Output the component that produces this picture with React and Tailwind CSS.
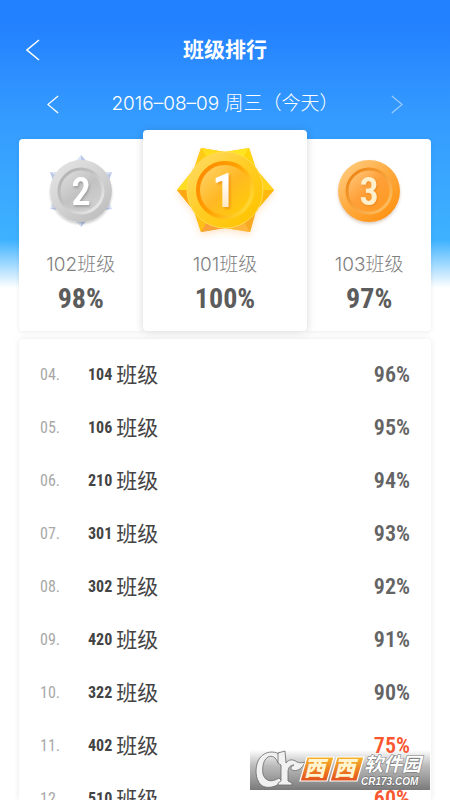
// src/App.jsx
import React, { memo } from 'react';

const rankings = [
    { rank: '04', room: '104', rate: 96 },
    { rank: '05', room: '106', rate: 95 },
    { rank: '06', room: '210', rate: 94 },
    { rank: '07', room: '301', rate: 93 },
    { rank: '08', room: '302', rate: 92 },
    { rank: '09', room: '420', rate: 91 },
    { rank: '10', room: '322', rate: 90 },
    { rank: '11', room: '402', rate: 75 },
    { rank: '12', room: '510', rate: 60 },
];

const Chevron = ({ flip, className }) => (
    <svg viewBox="0 0 14 22" className={className} fill="none" stroke="currentColor" strokeWidth="1.5" aria-hidden="true">
        <path d={flip ? 'M1 1 L13 11 L1 21' : 'M13 1 L1 11 L13 21'} />
    </svg>
);

const GoldMedal = () => (
    <svg viewBox="0 0 106 100" className="h-[100px] w-[106px]" role="img" aria-label="第一名">
        <defs>
            <linearGradient id="goldFace" x1="0.1" y1="0.1" x2="0.9" y2="0.9">
                <stop offset="0" stopColor="#ffd95c" />
                <stop offset="0.5" stopColor="#ffcc22" />
                <stop offset="1" stopColor="#ffc400" />
            </linearGradient>
            <linearGradient id="goldInner" x1="0" y1="0" x2="1" y2="1">
                <stop offset="0" stopColor="#ffd672" />
                <stop offset="0.5" stopColor="#ffb824" />
                <stop offset="1" stopColor="#ffd200" />
            </linearGradient>
            <linearGradient id="goldRing" x1="0" y1="0.2" x2="1" y2="0.8">
                <stop offset="0" stopColor="#ff8a00" />
                <stop offset="0.45" stopColor="#ffa000" />
                <stop offset="1" stopColor="#ffdc38" />
            </linearGradient>
            <linearGradient id="goldDigit" x1="0" y1="0" x2="0" y2="1">
                <stop offset="0.3" stopColor="#ffffff" />
                <stop offset="1" stopColor="#ffe0a8" />
            </linearGradient>
            <filter id="goldGlow" x="-20%" y="-20%" width="140%" height="140%">
                <feDropShadow dx="0" dy="3" stdDeviation="3" floodColor="#ff9a30" floodOpacity="0.25" />
            </filter>
            <filter id="goldDigitShadow" x="-50%" y="-20%" width="200%" height="150%">
                <feDropShadow dx="2" dy="2" stdDeviation="1.2" floodColor="#e88400" floodOpacity="0.6" />
            </filter>
        </defs>
        <g filter="url(#goldGlow)">
            <path d="M29 7 L53 11 L77 7 L84 28 L102 49 L84 70 L78 91 L53 87 L29 91 L22 70 L5 49 L22 28Z" fill="#ffc21a" />
            <path d="M29 7 L53 11 L53 49Z" fill="#ffdc1c" />
            <path d="M29 7 L22 28 L53 49Z" fill="#ffcb14" />
            <path d="M77 7 L53 11 L53 49Z" fill="#ffe420" />
            <path d="M77 7 L84 28 L53 49Z" fill="#ffd60e" />
            <path d="M102 49 L84 28 L53 49Z" fill="#ffd31a" />
            <path d="M102 49 L84 70 L53 49Z" fill="#ffb808" />
            <path d="M5 49 L22 28 L53 49Z" fill="#ffdd20" />
            <path d="M5 49 L22 70 L53 49Z" fill="#ffa812" />
            <path d="M29 91 L22 70 L53 49Z" fill="#ffbf14" />
            <path d="M29 91 L53 87 L53 49Z" fill="#f9a038" />
            <path d="M78 91 L53 87 L53 49Z" fill="#ffb63c" />
            <path d="M78 91 L84 70 L53 49Z" fill="#f9a824" />
        </g>
        <circle cx="53" cy="49" r="38" fill="url(#goldFace)" stroke="#ffdc50" strokeWidth="1" />
        <circle cx="53" cy="49" r="27" fill="url(#goldInner)" stroke="url(#goldRing)" strokeWidth="4" />
        <text x="52" y="66" textAnchor="middle" fontSize="48" fontWeight="600" fill="url(#goldDigit)" filter="url(#goldDigitShadow)" className="[font-family:'Roboto_Condensed',Roboto,sans-serif]">1</text>
    </svg>
);

const SilverMedal = () => (
    <svg viewBox="0 0 80 84" className="h-[84px] w-[80px]" role="img" aria-label="第二名">
        <defs>
            <linearGradient id="silverFace" x1="0.1" y1="0" x2="0.9" y2="1">
                <stop offset="0" stopColor="#e4e4e4" />
                <stop offset="0.5" stopColor="#d2d2d2" />
                <stop offset="1" stopColor="#bbbbbb" />
            </linearGradient>
            <linearGradient id="silverInner" x1="0.1" y1="0" x2="0.9" y2="1">
                <stop offset="0" stopColor="#dedede" />
                <stop offset="0.5" stopColor="#c2c2c2" />
                <stop offset="1" stopColor="#d4d4d4" />
            </linearGradient>
            <linearGradient id="silverRing" x1="0" y1="0" x2="1" y2="1">
                <stop offset="0" stopColor="#b0b0b0" />
                <stop offset="0.4" stopColor="#c0c0c0" />
                <stop offset="1" stopColor="#f0f0f0" />
            </linearGradient>
            <filter id="silverShadow" x="-20%" y="-20%" width="140%" height="150%">
                <feDropShadow dx="0" dy="2" stdDeviation="1.2" floodColor="#000000" floodOpacity="0.2" />
            </filter>
            <filter id="silverDigitShadow" x="-50%" y="-20%" width="200%" height="150%">
                <feDropShadow dx="1" dy="2" stdDeviation="1" floodColor="#888888" floodOpacity="0.6" />
            </filter>
        </defs>
        <path d="M40 6 L47 14 L33 14Z M71 23 L60 23 L67 34Z M71 60 L60 61 L67 50Z M40 78 L47 70 L33 70Z M9 60 L20 61 L13 50Z M9 23 L20 23 L13 34Z" fill="#dde4f5" />
        <path d="M40 6 L40 14 L47 14Z M71 23 L62 28 L67 34Z M71 60 L62 57 L60 61Z M40 78 L40 70 L47 70Z M9 60 L18 57 L20 61Z M9 23 L18 28 L13 34Z" fill="#bccaea" />
        <circle cx="40" cy="42" r="31" fill="url(#silverFace)" filter="url(#silverShadow)" />
        <circle cx="40" cy="42" r="22" fill="url(#silverInner)" stroke="url(#silverRing)" strokeWidth="3" />
        <text x="40" y="56" textAnchor="middle" fontSize="38" fontWeight="600" fill="#ffffff" filter="url(#silverDigitShadow)" className="[font-family:'Roboto_Condensed',Roboto,sans-serif]">2</text>
    </svg>
);

const BronzeMedal = () => (
    <svg viewBox="0 0 80 84" className="h-[84px] w-[80px]" role="img" aria-label="第三名">
        <defs>
            <linearGradient id="bronzeFace" x1="0.1" y1="0.1" x2="0.8" y2="0.9">
                <stop offset="0" stopColor="#ffc97a" />
                <stop offset="0.5" stopColor="#ffab40" />
                <stop offset="1" stopColor="#ff9416" />
            </linearGradient>
            <linearGradient id="bronzeInner" x1="0" y1="0" x2="0.9" y2="1">
                <stop offset="0" stopColor="#ffcd84" />
                <stop offset="0.5" stopColor="#ff9f38" />
                <stop offset="1" stopColor="#ff9a20" />
            </linearGradient>
            <linearGradient id="bronzeRing" x1="0" y1="0" x2="1" y2="1">
                <stop offset="0" stopColor="#e8800e" />
                <stop offset="0.4" stopColor="#f59a30" />
                <stop offset="1" stopColor="#ffc468" />
            </linearGradient>
            <filter id="bronzeShadow" x="-20%" y="-20%" width="140%" height="150%">
                <feDropShadow dx="0" dy="2" stdDeviation="1.5" floodColor="#906040" floodOpacity="0.3" />
            </filter>
            <filter id="bronzeDigitShadow" x="-50%" y="-20%" width="200%" height="150%">
                <feDropShadow dx="1" dy="1" stdDeviation="1" floodColor="#e07800" floodOpacity="0.6" />
            </filter>
        </defs>
        <circle cx="40" cy="42" r="31" fill="url(#bronzeFace)" filter="url(#bronzeShadow)" />
        <circle cx="40" cy="42" r="22" fill="url(#bronzeInner)" stroke="url(#bronzeRing)" strokeWidth="3" />
        <text x="40" y="56" textAnchor="middle" fontSize="38" fontWeight="600" fill="#fff0cc" filter="url(#bronzeDigitShadow)" className="[font-family:'Roboto_Condensed',Roboto,sans-serif]">3</text>
    </svg>
);

const PodiumInfo = ({ room, rate }) => (
    <>
        <h2 className="text-[19px] leading-7 font-light text-[#808080]">{room}班级</h2>
        <p className="mt-1 text-[28px] leading-8 font-bold text-[#5c5c5c] [font-family:'Roboto_Condensed',Roboto,sans-serif]">{rate}%</p>
    </>
);

const RankRow = memo(({ rank, room, rate }) => (
    <li className="flex h-[53px] shrink-0 items-center px-[21px]">
        <span className="w-12 text-base text-[#a8a8a8] [font-family:'Roboto_Condensed',Roboto,sans-serif]">{rank}.</span>
        <span className="flex flex-1 items-center gap-1 text-[#444]">
            <b className="text-base font-bold [font-family:'Roboto_Condensed',Roboto,sans-serif]">{room}</b>
            <span className="text-[21px]">班级</span>
        </span>
        <span className={`text-[22px] font-semibold [font-family:'Roboto_Condensed',Roboto,sans-serif] ${rate < 90 ? 'text-[#fa5630]' : 'text-[#646464]'}`}>
            {rate}%
        </span>
    </li>
));

const SiteMark = () => (
    <svg viewBox="0 0 180 40" className="absolute right-5 bottom-[10px] h-10 w-[180px]" role="img" aria-label="西西软件园">
        <defs>
            <linearGradient id="markBar" x1="0" y1="0" x2="0" y2="1">
                <stop offset="0" stopColor="#888888" stopOpacity="0" />
                <stop offset="0.4" stopColor="#8c8c8c" stopOpacity="0.6" />
                <stop offset="1" stopColor="#757575" stopOpacity="0.97" />
            </linearGradient>
            <linearGradient id="markTile" x1="0" y1="0" x2="0" y2="1">
                <stop offset="0" stopColor="#f6b52c" />
                <stop offset="1" stopColor="#e4501c" />
            </linearGradient>
        </defs>
        <rect width="180" height="40" fill="url(#markBar)" />
        {/* monogram with the leaf */}
        <g stroke="#6b6b6b" strokeWidth="0.8" fill="#f1f1f1" strokeLinejoin="round">
            <path d="M22 2 C26 2 27 4 30 3 L32 13 L28 13 C26 7 22 5 18 7 C13 10 12 18 13 24 C15 31 21 33 29 28 L32 31 C26 38 16 39 11 35 C5 29 5 18 8 11 C11 5 16 2 22 2Z" />
            <path d="M28 3 L35 1 L36 13 C39 9 43 9 47 12 C49 13 52 13 55 12 C52 19 47 22 42 20 C40 19 41 16 44 15 C40 15 38 18 38 22 L38 31 L42 33 L42 35 L28 35 L28 33 L31 31 L31 15 L28 13Z" />
        </g>
        <path d="M57 7 H84 L77 31 H50Z M87 7 H114 L107 31 H80Z" fill="url(#markTile)" stroke="#fff" strokeWidth="1.2" />
        <g fontWeight="900" fontStyle="italic" fill="#fff" className="[font-family:'Noto_Sans_CJK_SC',sans-serif]">
            <text x="54" y="26" fontSize="21" fill="#fff4d0">西</text>
            <text x="84" y="26" fontSize="21" fill="#fff4d0">西</text>
            <text x="114" y="21" fontSize="19" fontWeight="700" stroke="#707070" strokeWidth="1" paintOrder="stroke">软件园</text>
        </g>
        <text x="111" y="35" fontSize="10" fontWeight="700" fontStyle="italic" fill="#fff" stroke="#606060" strokeWidth="1" paintOrder="stroke" className="[font-family:'Liberation_Sans',sans-serif]">CR173.COM</text>
    </svg>
);

const App = () => (
    <div className="relative flex h-screen flex-col overflow-hidden bg-white bg-[linear-gradient(#2080ff_0px,#2482ff_30px,#3399ff_110px,#3eb2ff_240px,#ffffff_288px)] [font-family:Inter,'Noto_Sans_CJK_SC',sans-serif]">
        <header className="grid shrink-0 grid-cols-[64px_1fr_64px] items-center pt-8 text-white">
            <button type="button" aria-label="返回" className="flex h-9 items-center pl-[26px]">
                <Chevron className="h-[22px] w-[14px]" />
            </button>
            <h1 className="text-center text-[21px] leading-9 font-bold">班级排行</h1>
        </header>

        <nav className="mt-[18px] flex h-9 shrink-0 items-center justify-between px-[47px] text-white">
            <button type="button" aria-label="前一天">
                <Chevron className="h-[19px] w-3" />
            </button>
            <time dateTime="2016-08-09" className="text-[19px] font-light whitespace-nowrap">2016–08–09 周三（今天）</time>
            <button type="button" aria-label="后一天" className="opacity-50">
                <Chevron flip className="h-[19px] w-3" />
            </button>
        </nav>

        <main className="flex min-h-0 flex-1 flex-col px-[19px] pt-2">
            <section className="flex shrink-0 items-end text-center">
                <article className="flex flex-1 flex-col items-center rounded-l bg-white pt-[10px] pb-4 shadow-[0_1px_5px_rgba(0,0,0,0.08)]">
                    <SilverMedal />
                    <div className="mt-[18px]"><PodiumInfo room="102" rate={98} /></div>
                </article>
                <article className="relative z-10 flex w-[40%] flex-col items-center rounded bg-white pt-[11px] pb-4 shadow-[0_1px_8px_rgba(0,0,0,0.16)]">
                    <GoldMedal />
                    <div className="mt-[10px]"><PodiumInfo room="101" rate={100} /></div>
                </article>
                <article className="flex flex-1 flex-col items-center rounded-r bg-white pt-[10px] pb-4 shadow-[0_1px_5px_rgba(0,0,0,0.08)]">
                    <BronzeMedal />
                    <div className="mt-[18px]"><PodiumInfo room="103" rate={97} /></div>
                </article>
            </section>

            <ol className="mt-2 flex min-h-0 flex-1 flex-col overflow-hidden rounded-t bg-white pt-[9px] shadow-[0_0_6px_rgba(0,0,0,0.09)]">
                {rankings.map(item => (
                    <RankRow key={item.rank} {...item} />
                ))}
            </ol>
        </main>

        <SiteMark />
    </div>
);

export default App;
